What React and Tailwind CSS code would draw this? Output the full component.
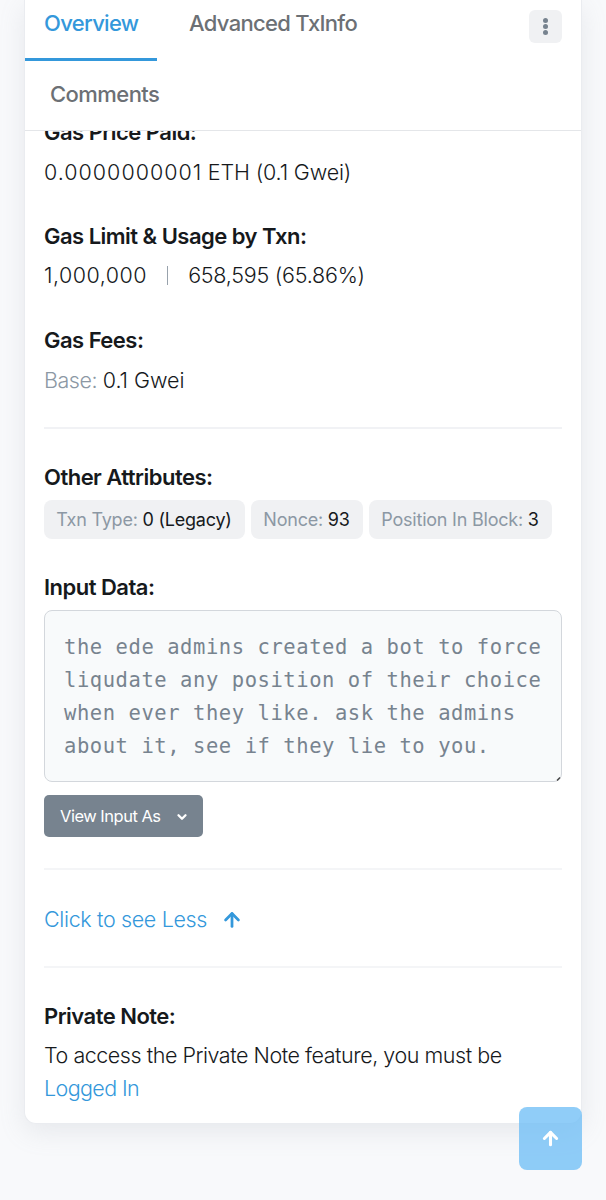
import { ChevronDown, ArrowUp } from "lucide-react";

function Title({ children, className = "" }) {
  return (
    <h3 className={`h-[33px] leading-[33px] text-[22px] font-semibold tracking-[-0.52px] whitespace-nowrap text-[#16191c] ${className}`}>
      {children}
    </h3>
  );
}

function Badge({ label, value, className = "" }) {
  return (
    <span className={`flex h-[39px] items-center justify-center rounded-lg bg-[#f0f1f3] pr-px text-[18px] tracking-[-0.22px] whitespace-pre text-[#8c98a4] ${className}`}>
      {label} <span className="text-[#16191c]">{value}</span>
    </span>
  );
}

export default function App() {
  return (
    <div className="relative h-[1200px] w-full overflow-hidden bg-[#f8f9fb] px-[24px] font-['Inter','Liberation_Sans',sans-serif]">
      <main className="h-[1124px] w-[558px] overflow-hidden rounded-b-xl border border-t-0 border-[#eaecf0] bg-white shadow-[0_8px_26px_rgba(140,152,164,0.16)]">
        <nav className="flex h-[131px] flex-col border-b border-[#e4e6e9] text-[22px] leading-[33px] font-medium tracking-[-0.68px] text-[#6c7075]">
          <div className="flex h-[61px] items-start">
            <div className="flex h-[61px] w-[132px] items-start border-b-[3px] border-[#3498db] pl-[19px]">
              <span className="mt-[7px] text-[#3498db]">Overview</span>
            </div>
            <span className="mt-[7px] ml-[32px]">Advanced TxInfo</span>
            <button className="mt-[10px] mr-[19px] ml-auto flex h-[33px] w-[33px] flex-col items-center justify-center gap-[1px] rounded-md bg-[#f0f1f3]">
              <i className="size-[5px] rounded-full bg-[#77838f]" />
              <i className="size-[5px] rounded-full bg-[#77838f]" />
              <i className="size-[5px] rounded-full bg-[#77838f]" />
            </button>
          </div>
          <span className="mt-[17px] ml-[25px] tracking-[-0.55px]">Comments</span>
        </nav>
        <div className="h-[992px] overflow-hidden px-[19px] text-[21.5px] leading-[33px] font-light tracking-[-0.46px] text-[#16191c]">
          <div className="-mt-[15px] flex flex-col items-start whitespace-nowrap">
            <Title>Gas Price Paid:</Title>
            <p className="mt-[7px]">
              <span className="tracking-[1px]">0.0000000001</span>{" "}
              <span className="tracking-[-0.15px]">ETH (0.1 Gwei)</span>
            </p>
            <Title className="mt-[31px]">{"Gas Limit & Usage by Txn:"}</Title>
            <p className="mt-[6px] flex">
              <span className="tracking-[0.5px]">1,000,000</span>
              <i className="mt-[7px] mr-[20px] ml-[20px] h-[19px] w-px bg-[#98a2ac]" />
              <span className="tracking-[-0.24px]">658,595 (65.86%)</span>
            </p>
            <Title className="mt-[32px]">Gas Fees:</Title>
            <p className="mt-[7px]">
              <span className="text-[#8c98a4]">Base:</span>{" "}
              <span className="tracking-[-0.05px]">0.1 Gwei</span>
            </p>
            <hr className="mt-[30px] w-full border-t-2 border-[#f1f2f5]" />
            <Title className="mt-[32px]">Other Attributes:</Title>
            <div className="mt-[6px] flex gap-[6px] font-normal">
              <Badge label="Txn Type:" value="0 (Legacy)" className="w-[201px]" />
              <Badge label="Nonce:" value="93" className="w-[112px]" />
              <Badge label="Position In Block:" value="3" className="w-[183px]" />
            </div>
            <Title className="mt-[32px]">Input Data:</Title>
            <div className="relative mt-[6px] h-[172px] w-[518px] rounded-lg border border-[#d3d7dc] bg-[#f8fafb] pt-[20px] pl-[19px] font-['DejaVu_Sans_Mono',monospace] text-[20.5px] font-normal tracking-[0.56px] text-[#77838f]">
              <p>the ede admins created a bot to force</p>
              <p>liqudate any position of their choice</p>
              <p>when ever they like. ask the admins</p>
              <p>about it, see if they lie to you.</p>
              <svg className="absolute right-0 bottom-0" width="5" height="5" viewBox="0 0 5 5">
                <path d="M1 4.5L4 1.5" stroke="#444" strokeWidth="1.5" />
              </svg>
            </div>
            <button className="mt-[13px] flex h-[42px] w-[159px] items-center rounded-[5px] bg-[#77838f] pl-[16px] text-[16.5px] font-normal tracking-[-0.5px] text-white">
              <span className="w-[101px] text-left">View Input As</span>
              <ChevronDown className="mt-px ml-[14px] size-[14px]" strokeWidth={4} />
            </button>
            <hr className="mt-[31px] w-full border-t-2 border-[#f4f5f7]" />
            <p className="mt-[33px] flex items-center text-[#3498db]">
              <span className="tracking-[-0.35px]">Click to see Less</span>
              <ArrowUp className="mt-px ml-[14px] size-[22px]" strokeWidth={3} />
            </p>
            <hr className="mt-[30px] w-full border-t-2 border-[#f4f5f7]" />
            <Title className="mt-[32px] tracking-[-0.6px]">Private Note:</Title>
            <p className="mt-[6px]">To access the Private Note feature, you must be</p>
            <p className="tracking-[-0.62px] text-[#3498db]">Logged In</p>
          </div>
        </div>
      </main>
      <button className="absolute top-[1107px] left-[519px] flex h-[63px] w-[63px] items-center justify-center rounded-lg bg-[#6bbcf5]/75 text-white">
        <ArrowUp className="size-[21px]" strokeWidth={3.5} />
      </button>
    </div>
  );
}
